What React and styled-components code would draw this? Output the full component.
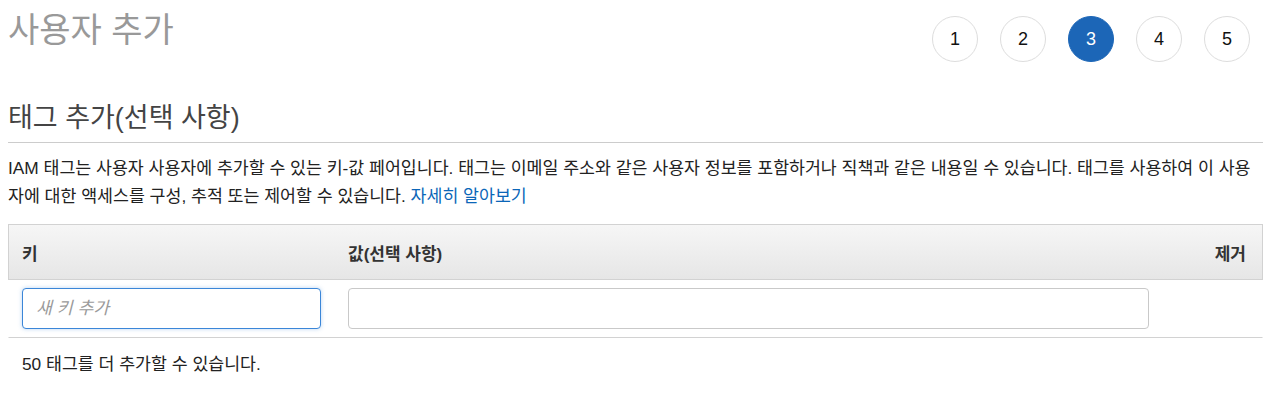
import styled, { createGlobalStyle } from "styled-components";

const GlobalStyle = createGlobalStyle`
  body {
    margin: 0;
    background: #ffffff;
    font-family: "Liberation Sans", "Noto Sans CJK KR", sans-serif;
    color: #222222;
  }
`;

const Page = styled.div`
  padding: 8px 17px 0 8px;
`;

const Header = styled.div`
  display: flex;
  justify-content: space-between;
  align-items: flex-start;
`;

const Title = styled.h1`
  margin: 4px 0 0;
  font-size: 34px;
  line-height: 36px;
  font-weight: 400;
  color: #999999;
`;

const Steps = styled.ol`
  display: flex;
  gap: 22px;
  list-style: none;
  margin: 8px 13px 0 0;
  padding: 0;
`;

const Step = styled.li`
  width: 46px;
  height: 46px;
  box-sizing: border-box;
  border-radius: 50%;
  display: flex;
  align-items: center;
  justify-content: center;
  font-size: 18px;
  border: 1px solid ${(p) => (p.$active ? "#1c66b7" : "#dddddd")};
  background: ${(p) => (p.$active ? "#1c66b7" : "#ffffff")};
  color: ${(p) => (p.$active ? "#ffffff" : "#111111")};
`;

const SectionTitle = styled.h2`
  margin: 41px 0 0;
  padding-bottom: 9px;
  border-bottom: 1px solid #cccccc;
  font-size: 27px;
  line-height: 30px;
  font-weight: 400;
  color: #444444;
`;

const Description = styled.p`
  margin: 11px 0 0;
  font-size: 17.3px;
  line-height: 28px;
  color: #222222;
`;

const Link = styled.a`
  color: #0b66b8;
  text-decoration: none;
`;

const TagTable = styled.div`
  margin-top: 14px;
`;

const Row = styled.div`
  display: grid;
  grid-template-columns: 326px 828px 1fr;
  border: 1px solid ${(p) => (p.$head ? "#d2d2d2" : "transparent")};
  border-bottom-color: #d2d2d2;
  background: ${(p) =>
    p.$head ? "linear-gradient(to bottom, #f6f6f6, #e6e6e6)" : "#ffffff"};
  ${(p) => !p.$head && "border-top: none;"}
`;

const HeadCell = styled.div`
  height: 54px;
  display: flex;
  align-items: center;
  justify-content: ${(p) => (p.$right ? "flex-end" : "flex-start")};
  padding: 0 ${(p) => (p.$right ? "16px" : "0")} 0 ${(p) => (p.$right ? "0" : "13px")};
  font-size: 17px;
  font-weight: 700;
  color: #333333;
`;

const InputCell = styled.div`
  padding: 8px 14px 8px 13px;
`;

const TextInput = styled.input`
  display: block;
  width: 100%;
  height: 41px;
  box-sizing: border-box;
  border-radius: 4px;
  border: 1px solid ${(p) => (p.$focused ? "#3b86d8" : "#c9c9c9")};
  box-shadow: ${(p) => (p.$focused ? "0 0 4px rgba(59, 134, 216, 0.35)" : "none")};
  padding: 0 13px;
  font-family: "Liberation Sans", "Noto Sans CJK KR", sans-serif;
  font-size: 17.3px;
  outline: none;
  &::placeholder {
    color: #9a9a9a;
    font-style: italic;
  }
`;

const Footnote = styled.p`
  margin: 14px 0 0;
  padding-left: 14px;
  font-size: 17.3px;
  line-height: 24px;
  color: #222222;
`;

export default function App() {
  return (
    <>
      <GlobalStyle />
      <Page>
        <Header>
          <Title>사용자 추가</Title>
          <Steps>
            {[1, 2, 3, 4, 5].map((n) => (
              <Step key={n} $active={n === 3}>
                {n}
              </Step>
            ))}
          </Steps>
        </Header>
        <SectionTitle>태그 추가(선택 사항)</SectionTitle>
        <Description>
          IAM 태그는 사용자 사용자에 추가할 수 있는 키-값 페어입니다. 태그는 이메일 주소와 같은 사용자 정보를 포함하거나 직책과 같은 내용일 수 있습니다. 태그를 사용하여 이 사용
          <br />
          자에 대한 액세스를 구성, 추적 또는 제어할 수 있습니다.{" "}
          <Link href="#">자세히 알아보기</Link>
        </Description>
        <TagTable>
          <Row $head>
            <HeadCell>키</HeadCell>
            <HeadCell>값(선택 사항)</HeadCell>
            <HeadCell $right>제거</HeadCell>
          </Row>
          <Row>
            <InputCell>
              <TextInput $focused placeholder="새 키 추가" />
            </InputCell>
            <InputCell>
              <TextInput />
            </InputCell>
            <InputCell />
          </Row>
        </TagTable>
        <Footnote>50 태그를 더 추가할 수 있습니다.</Footnote>
      </Page>
    </>
  );
}
